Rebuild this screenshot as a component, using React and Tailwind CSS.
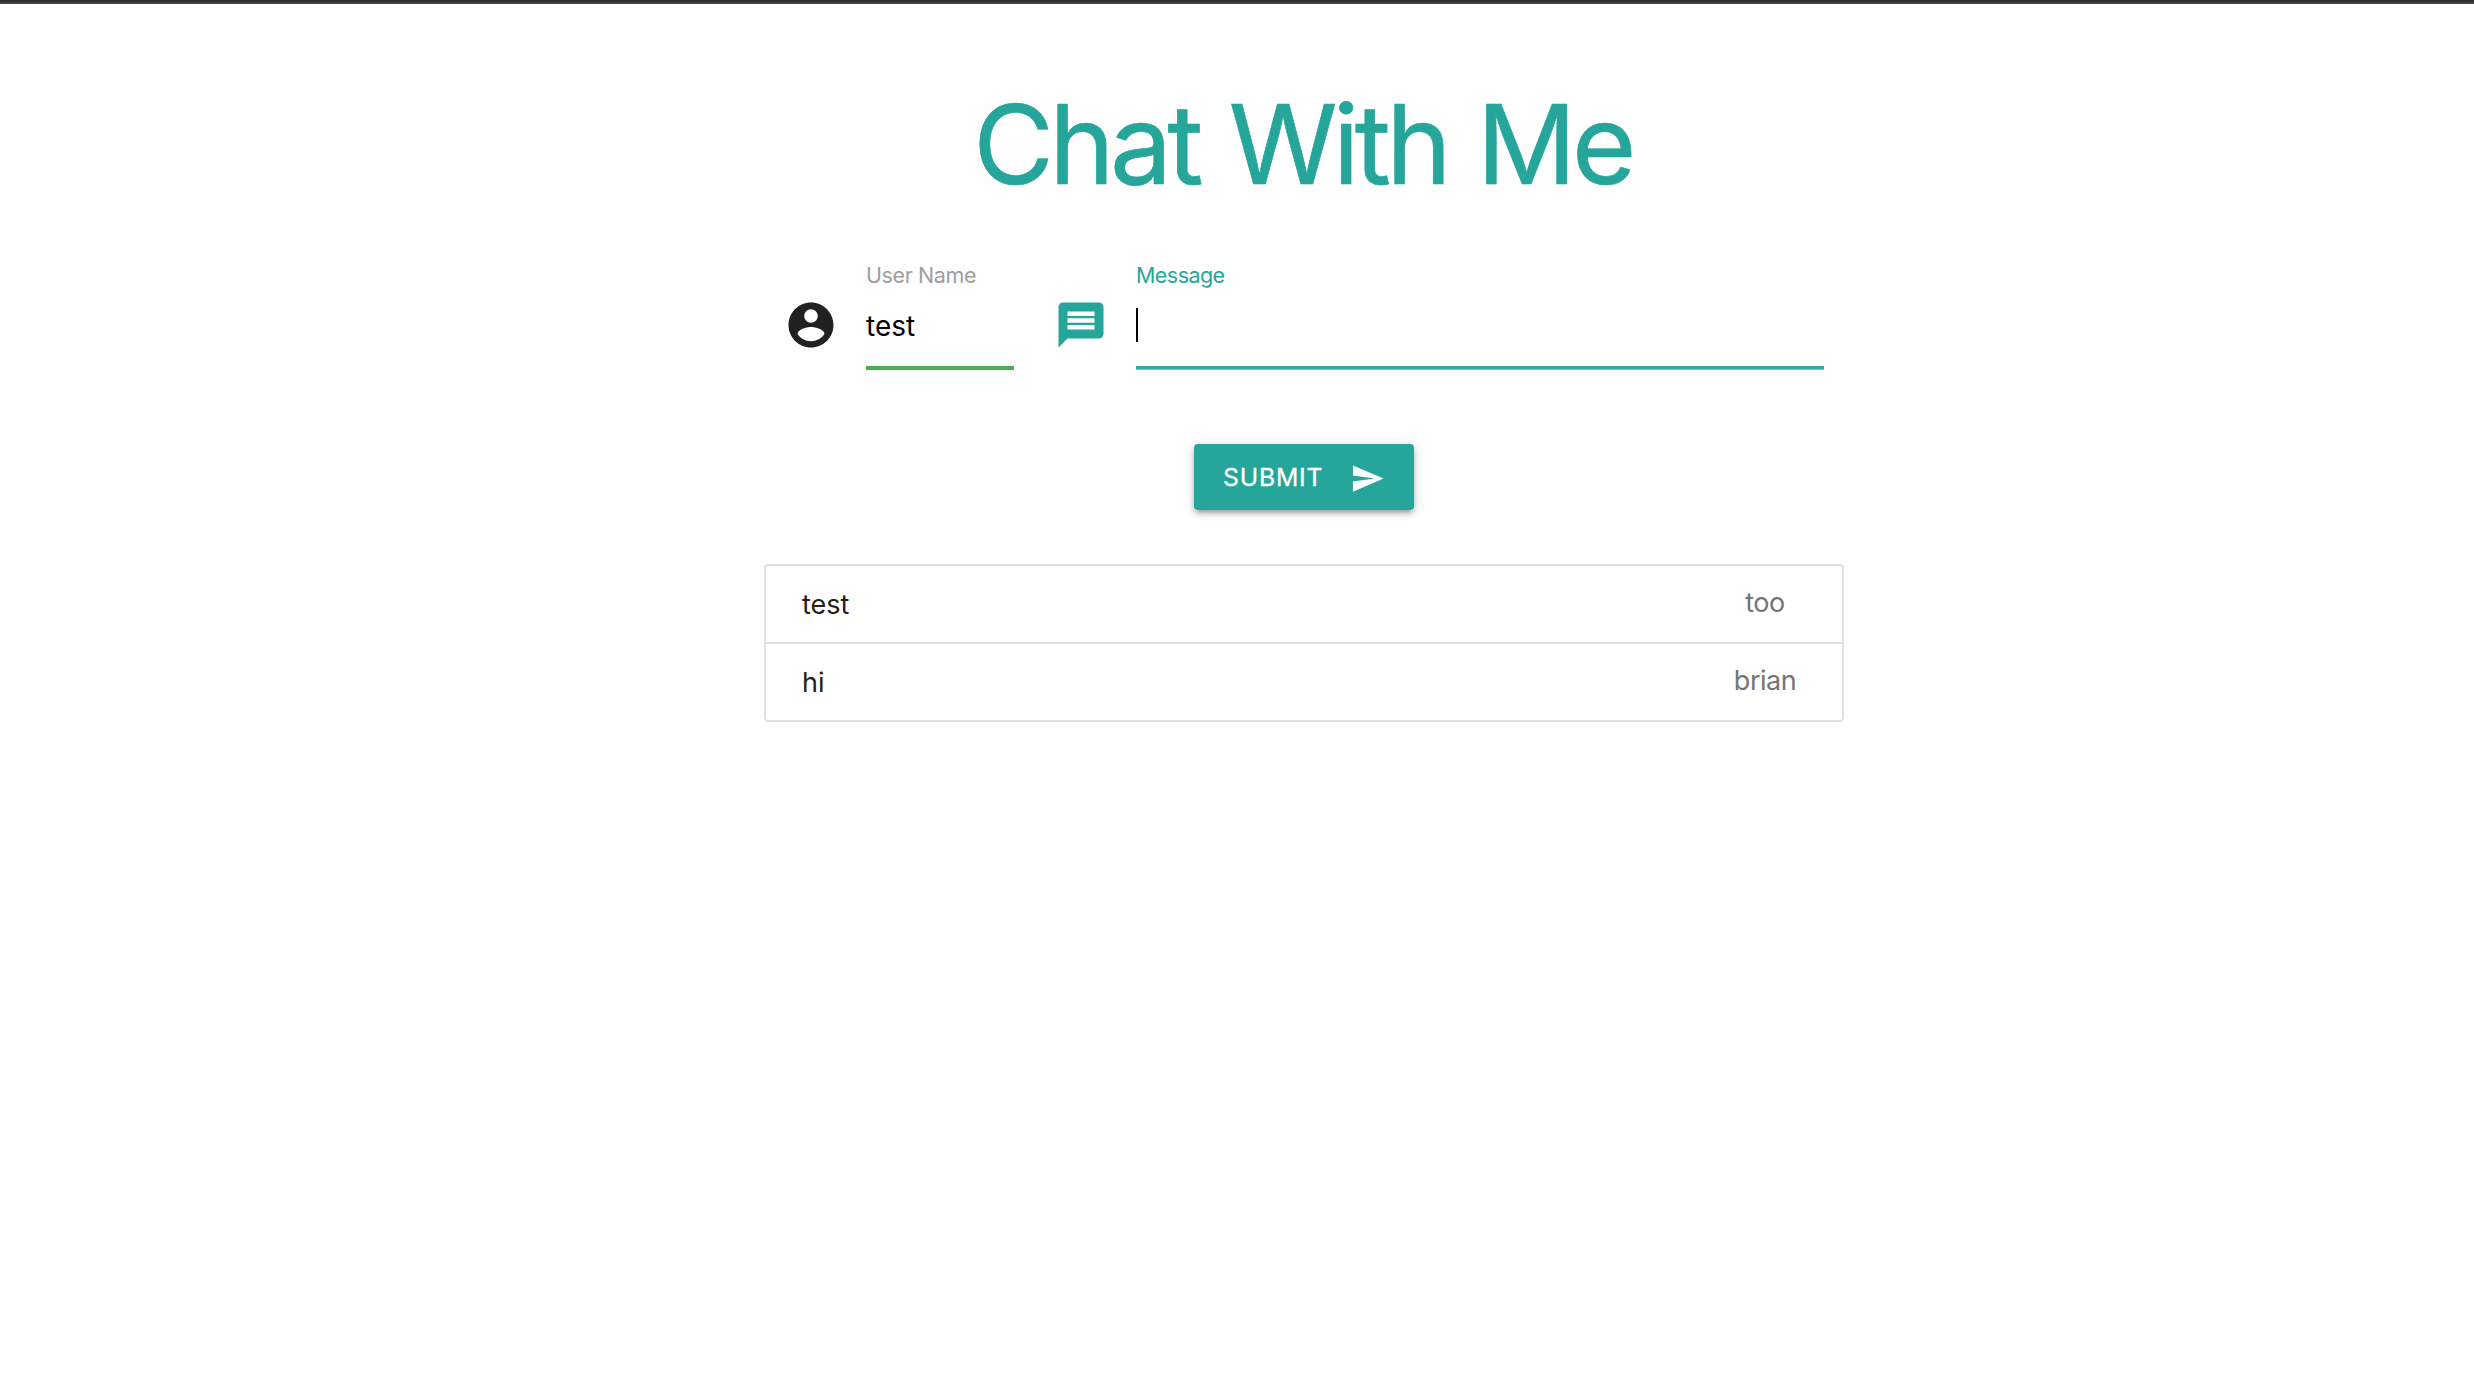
const messages = [
  { text: 'test', user: 'too' },
  { text: 'hi', user: 'brian' },
];

function Icon({ d, className }) {
  return (
    <svg viewBox="0 0 24 24" fill="currentColor" aria-hidden="true" className={className}>
      <path d={d} />
    </svg>
  );
}

const accountPath =
  'M12 2C6.48 2 2 6.48 2 12s4.48 10 10 10 10-4.48 10-10S17.52 2 12 2zm0 3c1.66 0 3 1.34 3 3s-1.34 3-3 3-3-1.34-3-3 1.34-3 3-3zm0 14.2c-2.5 0-4.71-1.28-6-3.22.03-1.99 4-3.08 6-3.08 1.99 0 5.97 1.09 6 3.08-1.29 1.94-3.5 3.22-6 3.22z';
const messagePath =
  'M20 2H4c-1.1 0-1.99.9-1.99 2L2 22l4-4h14c1.1 0 2-.9 2-2V4c0-1.1-.9-2-2-2zm-2 12H6v-2h12v2zm0-3H6V9h12v2zm0-3H6V6h12v2z';
const sendPath = 'M2.01 21L23 12 2.01 3 2 10l15 2-15 2z';

export default function App() {
  return (
    <div className="h-[1396px] overflow-hidden bg-[#fefefe] font-['Inter',sans-serif] text-[#212121]">
      <div className="h-1 border-b-2 border-[#444445] bg-[#2f2f30]" />
      <main className="mx-auto flex w-[1080px] translate-x-[67px] flex-col">
        <h1 className="mt-[70px] h-[140px] pr-[3px] text-center text-[110.5px] leading-[140px] tracking-[-4.7px] [word-spacing:3.5px] whitespace-nowrap text-[#26a69a] [-webkit-text-stroke:0.7px_#26a69a]">
          Chat With Me
        </h1>
        <form className="mt-[47px] flex flex-col items-center">
          <div className="flex w-full pl-5">
            <Icon d={accountPath} className="mt-[37px] size-[54px] shrink-0" />
            <label className="ml-[28px] flex w-[148px] flex-col">
              <span className="h-[30px] text-[21.5px] leading-[28px] tracking-[-0.4px] text-[#9e9e9e]">User Name</span>
              <span className="mt-4 h-[59px] text-[28px] leading-[38px] text-black">test</span>
              <span className="h-1 bg-[#4caf50]" />
            </label>
            <Icon d={messagePath} className="mt-[37px] ml-10 size-[54px] shrink-0 text-[#26a69a]" />
            <label className="ml-[28px] flex w-[688px] flex-col">
              <span className="h-[30px] text-[21.5px] leading-[28px] tracking-[-0.55px] text-[#26a69a]">Message</span>
              <span className="mt-[17px] h-[34px] w-0.5 bg-black" />
              <span className="mt-6 h-1 border-b border-[#7cc8c0] bg-[#33a79d]" />
            </label>
          </div>
          <button
            type="button"
            className="mt-[74px] flex h-[66px] w-[220px] items-center rounded-[4px] bg-[#26a69a] pl-[29px] text-white shadow-[0_4px_4px_0_rgba(0,0,0,0.14),0_6px_2px_-4px_rgba(0,0,0,0.12),0_2px_10px_0_rgba(0,0,0,0.2)]"
          >
            <span className="text-[24.75px] leading-[66px] tracking-[0.8px] [-webkit-text-stroke:0.3px_white]">SUBMIT</span>
            <Icon d={sendPath} className="mt-0.5 mr-[29.5px] ml-auto size-[35px]" />
          </button>
        </form>
        <ul className="mt-[54px] divide-y-2 divide-[#e0e0e0] rounded-[4px] border-2 border-[#e0e0e0] bg-white">
          {messages.map((m) => (
            <li key={m.user} className="flex h-[78px] justify-between pr-[23px] pl-9 text-[27px] last:h-[76px]">
              <span className="pt-[19px] leading-10">{m.text}</span>
              <span className="w-[108px] pt-[17px] text-center leading-10 tracking-[-0.5px] text-[#757575]">{m.user}</span>
            </li>
          ))}
        </ul>
      </main>
    </div>
  );
}
